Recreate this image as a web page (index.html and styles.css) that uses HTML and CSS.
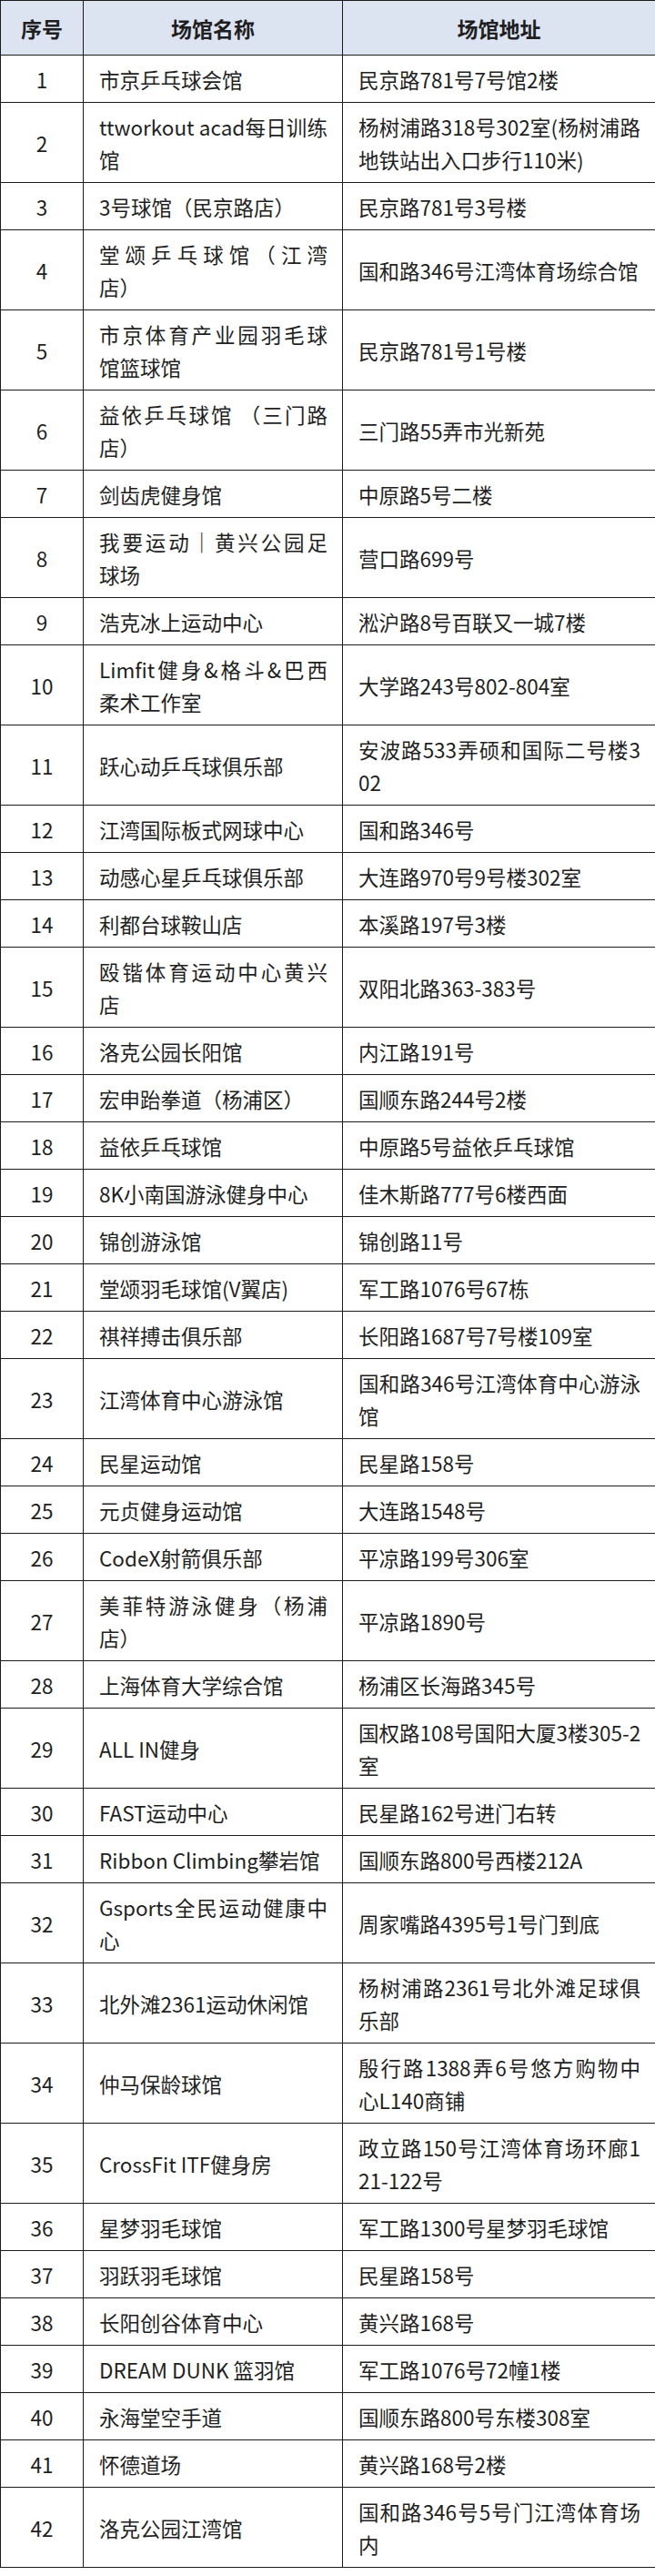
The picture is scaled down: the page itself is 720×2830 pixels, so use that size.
FILE: index.html
```html
<!DOCTYPE html>
<html lang="zh-CN">
<head>
<meta charset="utf-8">
<title>场馆列表</title>
<link rel="stylesheet" href="styles.css">
</head>
<body>
<table class="venues">
  <colgroup>
    <col class="c-num">
    <col class="c-name">
    <col class="c-addr">
  </colgroup>
  <thead>
    <tr><th>序号</th><th>场馆名称</th><th>场馆地址</th></tr>
  </thead>
  <tbody>
    <tr><td class="num">1</td><td>市京乒乓球会馆</td><td>民京路781号7号馆2楼</td></tr>
    <tr><td class="num">2</td><td><span class="ln j">ttworkout acad每日训练</span><span class="ln">馆</span></td><td><span class="ln j">杨树浦路318号302室(杨树浦路</span><span class="ln">地铁站出入口步行110米)</span></td></tr>
    <tr><td class="num">3</td><td>3号球馆（民京路店）</td><td>民京路781号3号楼</td></tr>
    <tr><td class="num">4</td><td><span class="ln j">堂颂乒乓球馆（江湾</span><span class="ln">店）</span></td><td>国和路346号江湾体育场综合馆</td></tr>
    <tr><td class="num">5</td><td><span class="ln j">市京体育产业园羽毛球</span><span class="ln">馆篮球馆</span></td><td>民京路781号1号楼</td></tr>
    <tr><td class="num">6</td><td><span class="ln j">益依乒乓球馆 （三门路</span><span class="ln">店）</span></td><td>三门路55弄市光新苑</td></tr>
    <tr><td class="num">7</td><td>剑齿虎健身馆</td><td>中原路5号二楼</td></tr>
    <tr><td class="num">8</td><td><span class="ln j">我要运动｜黄兴公园足</span><span class="ln">球场</span></td><td>营口路699号</td></tr>
    <tr><td class="num">9</td><td>浩克冰上运动中心</td><td>淞沪路8号百联又一城7楼</td></tr>
    <tr><td class="num">10</td><td><span class="ln j">Limfit健身&amp;格斗&amp;巴西</span><span class="ln">柔术工作室</span></td><td>大学路243号802-804室</td></tr>
    <tr><td class="num">11</td><td>跃心动乒乓球俱乐部</td><td><span class="ln j">安波路533弄硕和国际二号楼3</span><span class="ln">02</span></td></tr>
    <tr><td class="num">12</td><td>江湾国际板式网球中心</td><td>国和路346号</td></tr>
    <tr><td class="num">13</td><td>动感心星乒乓球俱乐部</td><td>大连路970号9号楼302室</td></tr>
    <tr><td class="num">14</td><td>利都台球鞍山店</td><td>本溪路197号3楼</td></tr>
    <tr><td class="num">15</td><td><span class="ln j">殴锴体育运动中心黄兴</span><span class="ln">店</span></td><td>双阳北路363-383号</td></tr>
    <tr><td class="num">16</td><td>洛克公园长阳馆</td><td>内江路191号</td></tr>
    <tr><td class="num">17</td><td>宏申跆拳道（杨浦区）</td><td>国顺东路244号2楼</td></tr>
    <tr><td class="num">18</td><td>益依乒乓球馆</td><td>中原路5号益依乒乓球馆</td></tr>
    <tr><td class="num">19</td><td>8K小南国游泳健身中心</td><td>佳木斯路777号6楼西面</td></tr>
    <tr><td class="num">20</td><td>锦创游泳馆</td><td>锦创路11号</td></tr>
    <tr><td class="num">21</td><td>堂颂羽毛球馆(V翼店)</td><td>军工路1076号67栋</td></tr>
    <tr><td class="num">22</td><td>祺祥搏击俱乐部</td><td>长阳路1687号7号楼109室</td></tr>
    <tr><td class="num">23</td><td>江湾体育中心游泳馆</td><td><span class="ln j">国和路346号江湾体育中心游泳</span><span class="ln">馆</span></td></tr>
    <tr><td class="num">24</td><td>民星运动馆</td><td>民星路158号</td></tr>
    <tr><td class="num">25</td><td>元贞健身运动馆</td><td>大连路1548号</td></tr>
    <tr><td class="num">26</td><td>CodeX射箭俱乐部</td><td>平凉路199号306室</td></tr>
    <tr><td class="num">27</td><td><span class="ln j">美菲特游泳健身（杨浦</span><span class="ln">店）</span></td><td>平凉路1890号</td></tr>
    <tr><td class="num">28</td><td>上海体育大学综合馆</td><td>杨浦区长海路345号</td></tr>
    <tr><td class="num">29</td><td>ALL IN健身</td><td><span class="ln j">国权路108号国阳大厦3楼305-2</span><span class="ln">室</span></td></tr>
    <tr><td class="num">30</td><td>FAST运动中心</td><td>民星路162号进门右转</td></tr>
    <tr><td class="num">31</td><td>Ribbon Climbing攀岩馆</td><td>国顺东路800号西楼212A</td></tr>
    <tr><td class="num">32</td><td><span class="ln j">Gsports全民运动健康中</span><span class="ln">心</span></td><td>周家嘴路4395号1号门到底</td></tr>
    <tr><td class="num">33</td><td>北外滩2361运动休闲馆</td><td><span class="ln j">杨树浦路2361号北外滩足球俱</span><span class="ln">乐部</span></td></tr>
    <tr><td class="num">34</td><td>仲马保龄球馆</td><td><span class="ln j">殷行路1388弄6号悠方购物中</span><span class="ln">心L140商铺</span></td></tr>
    <tr><td class="num">35</td><td>CrossFit ITF健身房</td><td><span class="ln j">政立路150号江湾体育场环廊1</span><span class="ln">21-122号</span></td></tr>
    <tr><td class="num">36</td><td>星梦羽毛球馆</td><td>军工路1300号星梦羽毛球馆</td></tr>
    <tr><td class="num">37</td><td>羽跃羽毛球馆</td><td>民星路158号</td></tr>
    <tr><td class="num">38</td><td>长阳创谷体育中心</td><td>黄兴路168号</td></tr>
    <tr><td class="num">39</td><td>DREAM DUNK 篮羽馆</td><td>军工路1076号72幢1楼</td></tr>
    <tr><td class="num">40</td><td>永海堂空手道</td><td>国顺东路800号东楼308室</td></tr>
    <tr><td class="num">41</td><td>怀德道场</td><td>黄兴路168号2楼</td></tr>
    <tr><td class="num">42</td><td>洛克公园江湾馆</td><td><span class="ln j">国和路346号5号门江湾体育场</span><span class="ln">内</span></td></tr>
  </tbody>
</table>
</body>
</html>
```

FILE: styles.css
```css
html, body {
  margin: 0;
  padding: 0;
  background: #ffffff;
}

body {
  font-family: "Noto Sans CJK SC", "Noto Sans", sans-serif;
  color: #1f1f1f;
}

.venues {
  width: 720px;
  border-collapse: collapse;
  table-layout: fixed;
}

.c-num { width: 91px; }
.c-name { width: 285px; }
.c-addr { width: 344px; }

.venues th,
.venues td {
  border: 1px solid #1c1c1c;
  padding: 7.5px 16px 7.5px 17px;
  font-size: 22.5px;
  line-height: 36px;
  vertical-align: middle;
  text-align: left;
  white-space: nowrap;
}

.venues th {
  background: #dce3f1;
  font-weight: 700;
  font-size: 23px;
  text-align: center;
  padding: 11.5px 6px;
}

.venues td.num {
  text-align: center;
  padding-left: 4px;
  padding-right: 4px;
}

.ln {
  display: block;
}

.j {
  text-align: justify;
  text-align-last: justify;
}
```
